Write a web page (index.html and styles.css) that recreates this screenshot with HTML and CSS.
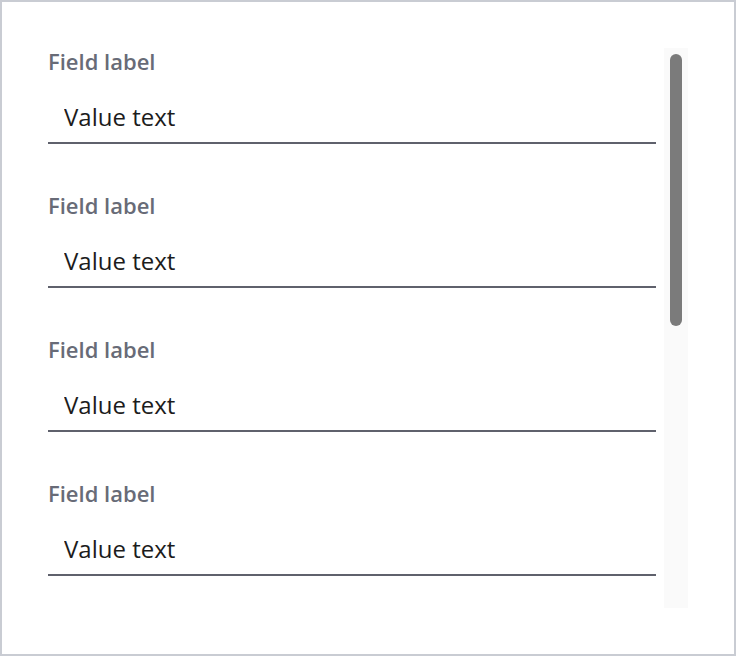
FILE: index.html
```html
<!DOCTYPE html>
<html lang="en">
<head>
  <meta charset="UTF-8" />
  <meta name="viewport" content="width=device-width, initial-scale=1.0"/>
  <title>Fields</title>
  <link rel="stylesheet" href="styles.css">
</head>
<body>
  <div class="frame">
    <form class="fields">
      <div class="field">
        <label class="field-label">Field label</label>
        <input class="field-input" type="text" value="Value text" />
      </div>
      <div class="field">
        <label class="field-label">Field label</label>
        <input class="field-input" type="text" value="Value text" />
      </div>
      <div class="field">
        <label class="field-label">Field label</label>
        <input class="field-input" type="text" value="Value text" />
      </div>
      <div class="field">
        <label class="field-label">Field label</label>
        <input class="field-input" type="text" value="Value text" />
      </div>
    </form>
    <div class="scroll-track">
      <div class="scroll-thumb"></div>
    </div>
  </div>
</body>
</html>
```

FILE: styles.css
```css
body {
  margin: 0;
  background: #fff;
  font-family: 'Open Sans', 'Noto Sans', sans-serif;
}

.frame {
  box-sizing: border-box;
  width: 736px;
  height: 656px;
  border: 2px solid #c9ccd3;
  padding: 44px 46px 46px;
  display: flex;
  align-items: flex-start;
  gap: 8px;
}

.fields {
  width: 608px;
  margin: 0;
}

.field {
  display: flex;
  flex-direction: column;
  margin-bottom: 46px;
}

.field-label {
  font-size: 22px;
  font-weight: 600;
  line-height: 30px;
  color: #686b77;
  margin-bottom: 24px;
}

.field-input {
  font-family: inherit;
  font-size: 24px;
  color: #1c1c1c;
  height: 32px;
  padding: 0 0 10px 16px;
  border: none;
  border-bottom: 2px solid #5f616c;
  background: transparent;
  outline: none;
}

.scroll-track {
  width: 24px;
  height: 560px;
  margin-top: 2px;
  background: #fafafa;
  padding-top: 6px;
  box-sizing: border-box;
  flex-shrink: 0;
}

.scroll-thumb {
  width: 12px;
  height: 272px;
  margin: 0 auto;
  border-radius: 6px;
  background: #7b7b7b;
}
```
